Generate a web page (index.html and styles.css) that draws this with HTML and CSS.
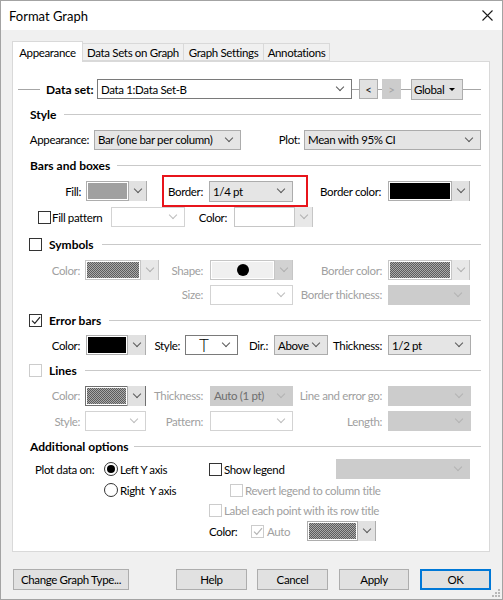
FILE: index.html
```html
<!DOCTYPE html>
<html>
<head>
<meta charset="utf-8">
<title>Format Graph</title>
<link rel="stylesheet" href="styles.css">
</head>
<body>
<div class="win">
  <div class="title">
    <span class="title-text">Format Graph</span>
    <svg class="close" width="11" height="11" viewBox="0 0 11 11"><path d="M.5.5l10 10M10.5.5l-10 10" stroke="#1a1a1a" stroke-width="1.1" fill="none"/></svg>
  </div>
  <div class="body">
    <div class="tabs">
      <div class="tab sel t1">Appearance</div>
      <div class="tab t2">Data Sets on Graph</div>
      <div class="tab t3">Graph Settings</div>
      <div class="tab t4">Annotations</div>
    </div>
    <div class="panel">
      <!-- Data set -->
      <div class="ds">
        <span class="ln ln1"></span>
        <span class="ds-lbl">Data set:</span>
        <div class="cb w ds-cb">Data 1:Data Set-B</div>
        <span class="ln ln2"></span>
        <div class="sb">&lt;</div>
        <span class="ln ln3"></span>
        <div class="sb d">&gt;</div>
        <span class="ln ln4"></span>
        <div class="glob"><span>Global</span><span class="tri"></span></div>
        <span class="ln ln5"></span>
      </div>

      <div class="hd h25">Style</div>
      <div class="row g-app h25">
        <div class="lb p5">Appearance:</div>
        <div class="cb">Bar (one bar per column)</div>
        <div class="lb p4">Plot:</div>
        <div class="cb">Mean with 95% CI</div>
      </div>

      <div class="hd h26 bars">Bars and boxes</div>
      <div class="row g-fill h25">
        <div class="lb p5">Fill:</div>
        <div class="cp"><span class="sw gray"></span><span class="bt"></span></div>
        <div class="redbox">
          <span class="rb-lbl">Border:</span>
          <div class="cb rb-cb">1/4 pt</div>
        </div>
        <div class="lb p7">Border color:</div>
        <div class="cp"><span class="sw black"></span><span class="bt"></span></div>
      </div>
      <div class="row g-pat h28">
        <div class="fp"><span class="ck"></span><span class="ml1">Fill pattern</span></div>
        <div class="cb dw"></div>
        <div class="lb p7">Color:</div>
        <div class="cp dcp"><span class="sw white"></span><span class="bt"></span></div>
      </div>

      <div class="hd ckhd h27"><span class="ck"></span>Symbols</div>
      <div class="row g-sym h24">
        <div class="lb p5 dis">Color:</div>
        <div class="cp dcp"><span class="sw dith"></span><span class="bt"></span></div>
        <div class="lb p7 dis">Shape:</div>
        <div class="cp dcp shape"><span class="sw lt"><span class="dot"></span></span><span class="bt gb"></span></div>
        <div class="lb p6 dis">Border color:</div>
        <div class="cp dcp"><span class="sw dith"></span><span class="bt"></span></div>
      </div>
      <div class="row g-sym h25">
        <div class="lb p7 dis c3">Size:</div>
        <div class="cb dw"></div>
        <div class="lb p6 dis">Border thickness:</div>
        <div class="cb dg"></div>
      </div>

      <div class="hd ckhd h26"><span class="ck"><svg width="10" height="9" viewBox="0 0 10 9"><path d="M1 4.6 3.8 7.4 9 1.2" fill="none" stroke="#222" stroke-width="1.2"/></svg></span>Error bars</div>
      <div class="row g-err h24">
        <div class="lb p6">Color:</div>
        <div class="cp"><span class="sw black"></span><span class="bt"></span></div>
        <div class="lb p5">Style:</div>
        <div class="cb w tsel"><span class="tg">T</span></div>
        <div class="lb p6">Dir.:</div>
        <div class="cb">Above</div>
        <div class="lb p6">Thickness:</div>
        <div class="cb">1/2 pt</div>
      </div>

      <div class="hd ckhd h26"><span class="ck d"></span>Lines</div>
      <div class="row g-lin h25">
        <div class="lb p5 dis">Color:</div>
        <div class="cp dark"><span class="sw dith"></span><span class="bt"></span></div>
        <div class="lb p7 dis">Thickness:</div>
        <div class="cb dg">Auto (1 pt)</div>
        <div class="lb p6 dis">Line and error go:</div>
        <div class="cb dg"></div>
      </div>
      <div class="row g-lin h26">
        <div class="lb p5 dis">Style:</div>
        <div class="cb dw"></div>
        <div class="lb p7 dis">Pattern:</div>
        <div class="cb dw"></div>
        <div class="lb p6 dis">Length:</div>
        <div class="cb dg"></div>
      </div>

      <div class="hd h24 addl">Additional options</div>
      <div class="add">
        <div class="a-lbl">Plot data on:</div>
        <div class="a-rd"><span class="rd on"></span><span class="ml2">Left Y axis</span></div>
        <div class="a-r1"><span class="ck"></span><span class="ml2">Show legend</span><div class="cb dg a-sel"></div></div>

        <div></div>
        <div class="a-rd"><span class="rd"></span><span class="ml2">Right&nbsp; Y axis</span></div>
        <div class="a-r2"><span class="ck d"></span><span class="ml2 dis">Revert legend to column title</span></div>

        <div></div>
        <div></div>
        <div class="a-r3"><span class="ck d"></span><span class="ml2 dis">Label each point with its row title</span></div>

        <div></div>
        <div></div>
        <div class="a-r4">
          <span class="a-c">Color:</span>
          <span class="ck d"><svg width="10" height="9" viewBox="0 0 10 9"><path d="M1 4.6 3.8 7.4 9 1.2" fill="none" stroke="#b5b5b5" stroke-width="1.2"/></svg></span>
          <span class="a-auto dis">Auto</span>
          <div class="cp a-cp"><span class="sw dith"></span><span class="bt"></span></div>
        </div>
      </div>
    </div>

    <div class="btns">
      <div class="btn b-chg">Change Graph Type...</div>
      <div class="btn b-help">Help</div>
      <div class="btn b-can">Cancel</div>
      <div class="btn b-app">Apply</div>
      <div class="btn ok">OK</div>
    </div>
  </div>
  <svg class="grip" width="8" height="8" viewBox="0 0 8 8">
    <rect x="6" y="0" width="2" height="2" fill="#b8b8b8"/>
    <rect x="3" y="3" width="2" height="2" fill="#b8b8b8"/>
    <rect x="6" y="3" width="2" height="2" fill="#b8b8b8"/>
    <rect x="0" y="6" width="2" height="2" fill="#b8b8b8"/>
    <rect x="3" y="6" width="2" height="2" fill="#b8b8b8"/>
    <rect x="6" y="6" width="2" height="2" fill="#b8b8b8"/>
  </svg>
</div>
</body>
</html>
```
FILE: styles.css
```css
* { box-sizing: border-box; }
html, body { margin: 0; padding: 0; }
body {
  font-family: Lato, "Liberation Sans", sans-serif;
  font-size: 11.5px;
  letter-spacing: -0.35px;
  color: #000;
  background: #fff;
}

.win {
  position: relative;
  width: 503px;
  height: 600px;
  border: 1px solid #a3a3a3;
  background: #f0f0f0;
}

.title {
  height: 29px;
  background: #fff;
  display: flex;
  align-items: center;
  padding: 0 9px 0 8px;
}
.title-text { font-size: 13px; letter-spacing: 0; }
.close { margin-left: auto; }

.body { padding: 11px 0 0 11px; }

/* tabs */
.tabs { display: flex; height: 20px; position: relative; z-index: 1; }
.tab {
  height: 18px;
  margin-top: 2px;
  border: 1px solid #d9d9d9;
  border-left: none;
  background: #f0f0f0;
  display: flex;
  align-items: center;
  justify-content: center;
  white-space: nowrap;
}
.tab.sel {
  height: 21px;
  margin-top: 0;
  background: #fff;
  border-left: 1px solid #d9d9d9;
  border-bottom: none;
}
.t1 { width: 71px; }
.t2 { width: 101px; }
.t3 { width: 80px; }
.t4 { width: 66px; }

.panel {
  width: 478px;
  height: 491px;
  background: #fff;
  border: 1px solid #d9d9d9;
  padding-top: 14px;
}

/* data set row */
.ds { display: flex; align-items: center; height: 26px; }
.ln { height: 1px; background: #a6a6a6; flex: none; }
.ln1 { width: 22px; margin-left: 5px; }
.ds-lbl { margin-left: 6px; width: 51px; font-weight: 700; font-size: 12px; letter-spacing: 0; }
.ds-cb { width: 255px; }
.ln2 { width: 7px; }
.ln3 { width: 4px; }
.ln4 { width: 10px; }
.ln5 { width: 18px; }
.sb {
  width: 19px; height: 20px;
  border: 1px solid #adadad;
  background: #e1e1e1;
  display: flex; align-items: center; justify-content: center;
  color: #1a1a1a;
}
.sb.d { background: #cccccc; border-color: #cccccc; color: #a3a3a3; }
.glob {
  width: 52px; height: 21px;
  border: 1px solid #adadad;
  background: #e1e1e1;
  display: flex; align-items: center;
  padding-left: 2px;
}
.tri {
  margin: 0 7px 0 auto;
  width: 0; height: 0;
  border-left: 3px solid transparent;
  border-right: 3px solid transparent;
  border-top: 3px solid #000;
}

/* headings */
.hd {
  display: flex;
  align-items: center;
  font-weight: 700;
  font-size: 12px;
  letter-spacing: 0;
  padding-left: 17px;
  padding-right: 8px;
  white-space: nowrap;
}
.hd::after {
  content: "";
  flex: 1;
  height: 1px;
  background: #c9c9c9;
  margin-left: 7px;
}
.hd.ckhd { padding-left: 16px; }
.hd.ckhd::after { margin-left: 8px; }
.hd.ckhd .ck { margin-right: 7px; }
.hd.addl::after { margin-left: 5px; }

.h20 { height: 20px; } .h22 { height: 22px; } .h24 { height: 24px; }
.h25 { height: 25px; } .h26 { height: 26px; } .h27 { height: 27px; } .h28 { height: 28px; }

/* generic rows */
.row { display: grid; align-items: center; }
.lb { text-align: right; white-space: nowrap; }
.p4 { padding-right: 4px; } .p5 { padding-right: 5px; }
.p6 { padding-right: 6px; } .p7 { padding-right: 7px; }
.dis { color: #a0a0a0; }
.c3 { grid-column: 3; }
.ml1 { margin-left: 1px; } .ml2 { margin-left: 2px; }

.g-app { grid-template-columns: 81px 147px 63px 177px; }
.g-fill { grid-template-columns: 73px 61px 161px 80px 82px; }
.g-pat { grid-template-columns: 98px 74px 49px 79px; }
.g-sym { grid-template-columns: 72px 74px 51px 83px 95px 82px; }
.g-err { grid-template-columns: 73px 60px 39px 53px 36px 54px 60px 83px; }
.g-lin { grid-template-columns: 72px 61px 64px 83px 95px 83px; }

/* combo box */
.cb {
  height: 20px;
  display: flex;
  align-items: center;
  border: 1px solid #acacac;
  background: #e5e5e5;
  padding-left: 3px;
  white-space: nowrap;
  overflow: hidden;
}
.cb::after {
  content: "";
  flex: none;
  width: 5px; height: 5px;
  border-right: 1px solid #5a5a5a;
  border-bottom: 1px solid #5a5a5a;
  transform: rotate(45deg);
  margin: -4px 8px 0 auto;
}
.cb.w { background: #fff; border-color: #7a7a7a; }
.cb.dw { background: #fff; border-color: #d3d3d3; }
.cb.dw::after { border-color: #bdbdbd; }
.cb.dg { background: #cccccc; border-color: #cccccc; color: #6e6e6e; }
.cb.dg::after { border-color: #b3b3b3; }

/* color picker */
.cp {
  height: 20px;
  display: flex;
  border: 1px solid #adadad;
  background: #fff;
  padding: 1px 0 1px 1px;
}
.cp .sw { flex: 1; display: flex; align-items: center; justify-content: center; }
.cp .bt {
  flex: none;
  width: 18px;
  margin: -2px 0 -2px 1px;
  background: #e1e1e1;
  border-left: 1px solid #adadad;
  display: flex; align-items: center; justify-content: center;
}
.cp .bt::after {
  content: "";
  width: 5px; height: 5px;
  border-right: 1px solid #5a5a5a;
  border-bottom: 1px solid #5a5a5a;
  transform: rotate(45deg);
  margin-top: -4px;
}
.cp.dcp { border-color: #c6c6c6; }
.cp.dcp .bt { border-left-color: #c6c6c6; background: #e8e8e8; }
.cp.dcp .bt::after { border-color: #b0b0b0; }
.cp.dark { border-color: #6f6f6f; }
.sw.gray { background: #a0a0a0; }
.sw.black { background: #000; }
.sw.white { background: #fff; }
.sw.lt { background: #f0f0f0; }
.sw.dith {
  background: repeating-conic-gradient(#5c5c5c 0 25%, #a9a9a9 0 50%) 0 0 / 2px 2px;
}
.cp.shape .bt.gb { background: #d2d2d2; }
.dot { width: 12px; height: 12px; border-radius: 50%; background: #000; }

/* red highlight */
.redbox {
  justify-self: end;
  width: 146px;
  height: 32px;
  margin: -3px 0;
  border: 2px solid #e8141b;
  display: flex;
  align-items: center;
  padding-left: 4px;
}
.rb-cb { width: 84px; height: 21px; margin-left: auto; margin-right: 13px; }

/* fill pattern */
.fp { display: flex; align-items: center; padding-left: 25px; }

/* checkbox / radio */
.ck {
  flex: none;
  width: 13px; height: 13px;
  border: 1px solid #333;
  background: #fff;
  display: inline-flex;
  align-items: center;
  justify-content: center;
}
.ck.d { border-color: #cccccc; }
.rd {
  flex: none;
  width: 14px; height: 14px;
  border: 1px solid #333;
  border-radius: 50%;
  background: #fff;
  display: inline-flex;
  align-items: center;
  justify-content: center;
}
.rd.on::after {
  content: "";
  width: 8px; height: 8px;
  border-radius: 50%;
  background: #000;
}

/* error style "T" */
.tsel .tg {
  width: 30px;
  text-align: center;
  font-size: 17px;
  font-weight: 300;
  line-height: 1;
  letter-spacing: 0;
}

/* additional options */
.add {
  display: grid;
  grid-template-columns: 91px 105px 280px;
  grid-template-rows: 22px 20px 20px 22px;
  align-items: center;
}
.a-lbl { padding-left: 22px; white-space: nowrap; }
.a-rd { display: flex; align-items: center; white-space: nowrap; }
.a-r1, .a-r2, .a-r3, .a-r4 { display: flex; align-items: center; white-space: nowrap; }
.a-sel { width: 134px; margin-left: auto; margin-right: 19px; }
.a-r2 { padding-left: 21px; }
.a-c { width: 42px; }
.a-auto { width: 43px; padding-left: 3px; }
.a-cp { width: 69px; height: 20px; }

/* bottom buttons */
.btns { display: flex; margin-top: 17px; padding-left: 1px; height: 21px; }
.btn {
  height: 21px;
  border: 1px solid #adadad;
  background: #e1e1e1;
  display: flex; align-items: center; justify-content: center;
  white-space: nowrap;
}
.b-chg { width: 116px; }
.b-help { width: 71px; margin-left: 47px; }
.b-can { width: 71px; margin-left: 10px; }
.b-app { width: 70px; margin-left: 11px; }
.btn.ok { width: 71px; margin-left: 11px; border: 2px solid #0078d7; }

.grip { position: absolute; right: 2px; bottom: 2px; }
```
